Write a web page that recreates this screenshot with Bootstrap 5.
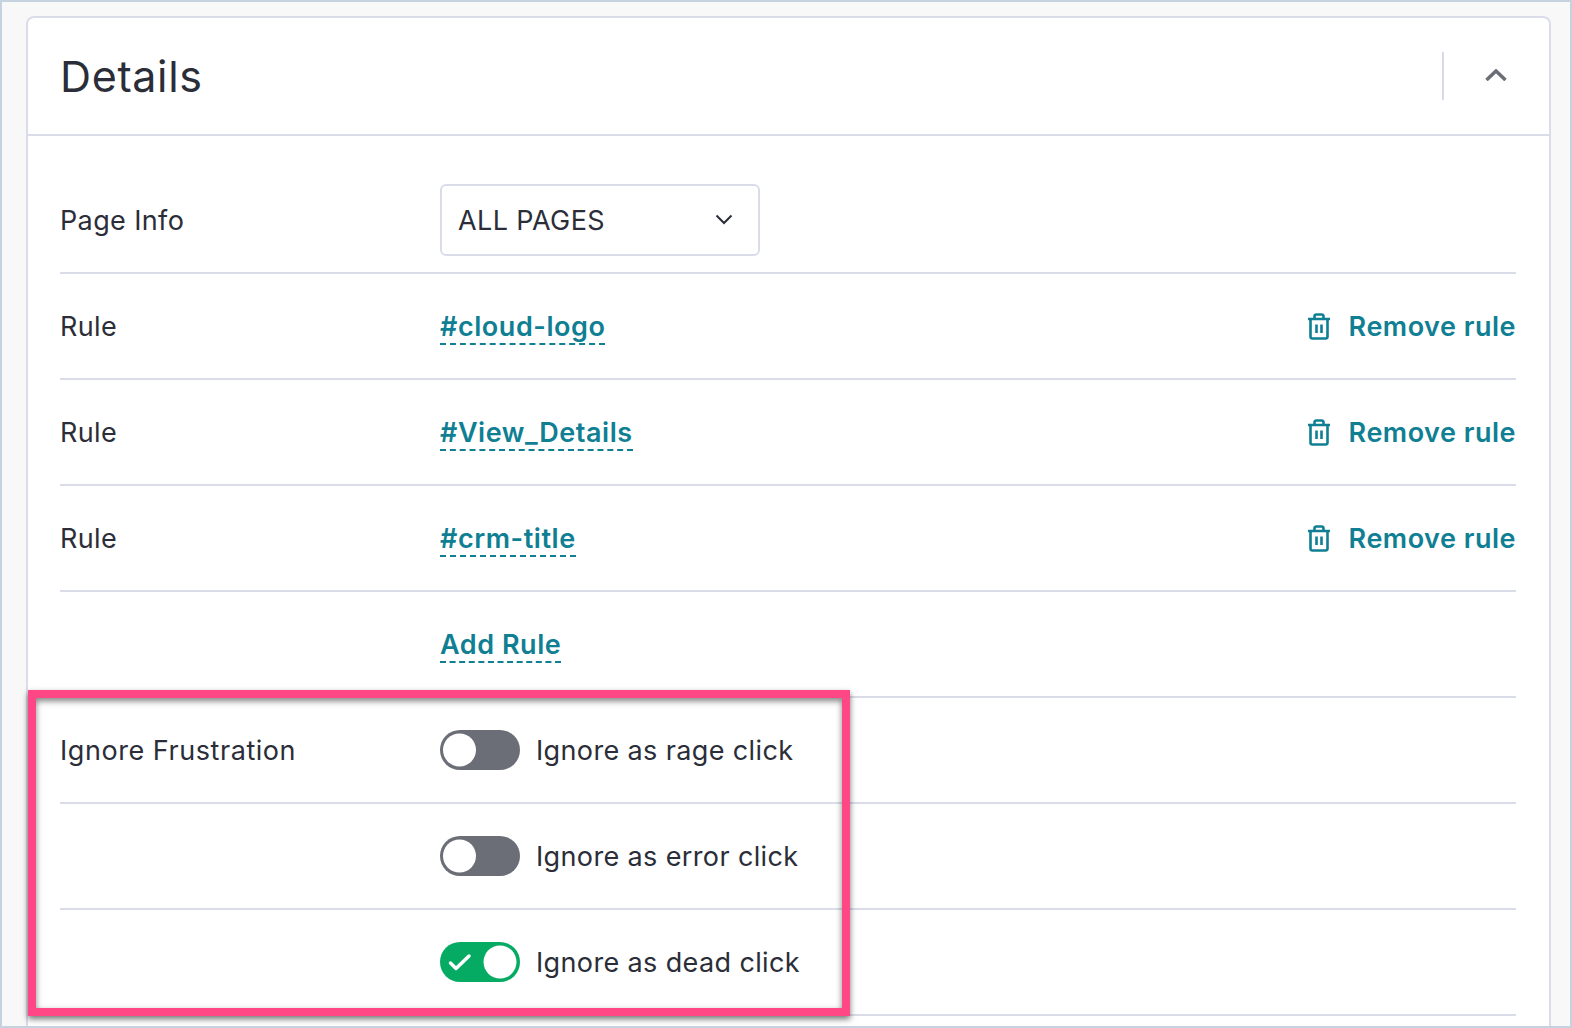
<!DOCTYPE html>
<html lang="en">
<head>
<meta charset="utf-8">
<title>Details</title>
<link href="https://cdn.jsdelivr.net/npm/bootstrap@5.3.0/dist/css/bootstrap.min.css" rel="stylesheet">
<style>
html,body{height:100%;overflow:hidden}
body{background:#f8f8f9;font-family:Inter,"Liberation Sans",sans-serif;color:#2b2e38;font-size:27px;letter-spacing:.37px}
.frame{position:relative;height:1028px;width:1572px;border:solid #c5d3e0;border-width:2px 2px 2px 2px;padding:14px 19px 0 24px;overflow:hidden;background:#f8f8f9}
.panel{background:#fff;border:2px solid #dadde9;border-bottom:0;border-radius:8px 8px 0 0;height:1100px}
.panel-head{height:118px;border-bottom:2px solid #dadde9;padding:0 34px 0 32px}
.panel-title{font-size:43px;font-weight:400;margin:0;line-height:1;letter-spacing:.65px;color:#2b2e38}
.head-tools{height:48px;border-left:2px solid #d8dbe6;width:77px;margin-right:-4px;padding-left:41px;padding-bottom:2px}
.panel-body{padding:31px 33px 0 32px}
.item{height:106px;border-bottom:2px solid #dadde9}
.item-first{height:107px}
.item-label{width:380px;flex:none;padding-top:2px}
.item-first .item-label{padding-top:4px}
.item-label.wide{letter-spacing:.55px}
.pick{width:320px;height:72px;border:2px solid #dadde9;border-radius:6px;padding:4px 25px 0 16px;background:#fff;color:#2b2e38;font-size:27px;letter-spacing:.4px}
.pick svg{margin-top:-4px}
.pick:hover,.pick:focus{background:#fff;border-color:#dadde9;color:#2b2e38}
.rule-link{color:#107f93;font-weight:600;text-decoration:none;border-bottom:2px dashed #107f93;line-height:1.15;margin-top:4px;letter-spacing:.55px}
.remove-link{color:#107f93;font-weight:600;text-decoration:none;gap:18px;padding-top:2px;letter-spacing:.5px}
.remove-link svg{margin-top:-2px}
.form-switch .form-check-input.tog{width:80px;height:40px;margin:0 16px 0 0;float:none;border-radius:20px;border:0;background-color:#6b6e77;box-shadow:none;
background-image:url("data:image/svg+xml,%3Csvg xmlns='http://www.w3.org/2000/svg' viewBox='0 0 80 40'%3E%3Ccircle cx='19.500' cy='20' r='16.5' fill='%23fff'/%3E%3C/svg%3E");background-size:80px 40px;background-position:0 0}
.form-switch .form-check-input.tog:checked{background-color:#05ab62;
background-image:url("data:image/svg+xml,%3Csvg xmlns='http://www.w3.org/2000/svg' viewBox='0 0 80 40'%3E%3Ccircle cx='60' cy='20' r='16.5' fill='%23fff'/%3E%3Cpath d='M10.5 21l5.500 5.500L29 14' fill='none' stroke='%23fff' stroke-width='3.500' stroke-linecap='round' stroke-linejoin='round'/%3E%3C/svg%3E")}
.tog-wrap{padding-left:0;min-height:0;margin:0}
.tog-wrap .form-check-label{opacity:1;padding-top:2px}
.callout{position:absolute;left:26px;top:688px;width:822px;height:326px;border:8px solid #ff4785;box-shadow:0 3px 6px rgba(0,0,0,.55),inset 0 3px 6px rgba(0,0,0,.5);pointer-events:none}
</style>
</head>
<body>
<div class="frame">
  <div class="panel">
    <div class="panel-head d-flex align-items-center justify-content-between">
      <h1 class="panel-title">Details</h1>
      <div class="head-tools d-flex align-items-center">
        <svg width="22" height="12" viewBox="0 0 22 12" fill="none" stroke="#6b6e77" stroke-width="3.500"><path d="M1.500 11 11 2l9.500 9"/></svg>
      </div>
    </div>
    <div class="panel-body">
      <div class="item item-first d-flex align-items-center">
        <div class="item-label">Page Info</div>
        <button type="button" class="btn pick d-flex align-items-center justify-content-between">ALL PAGES
          <svg width="18" height="11" viewBox="0 0 18 11" fill="none" stroke="#2b2e38" stroke-width="2"><path d="M1.500 1.500 9 9l7.500-7.500"/></svg>
        </button>
      </div>
      <div class="item d-flex align-items-center">
        <div class="item-label">Rule</div>
        <a class="rule-link" href="#">#cloud-logo</a>
        <a class="remove-link ms-auto d-flex align-items-center" href="#"><svg width="24" height="27" viewBox="0 0 24 27" fill="none" stroke="#107f93" stroke-width="2.600" stroke-linejoin="round"><path d="M1 6h22M3.500 6v17.500a2 2 0 0 0 2 2h13a2 2 0 0 0 2-2V6M7.500 6V3.500a2 2 0 0 1 2-2h5a2 2 0 0 1 2 2V6M9.500 11.500v8.500M14.500 11.500v8.500"/></svg>Remove rule</a>
      </div>
      <div class="item d-flex align-items-center">
        <div class="item-label">Rule</div>
        <a class="rule-link" href="#">#View_Details</a>
        <a class="remove-link ms-auto d-flex align-items-center" href="#"><svg width="24" height="27" viewBox="0 0 24 27" fill="none" stroke="#107f93" stroke-width="2.600" stroke-linejoin="round"><path d="M1 6h22M3.500 6v17.500a2 2 0 0 0 2 2h13a2 2 0 0 0 2-2V6M7.500 6V3.500a2 2 0 0 1 2-2h5a2 2 0 0 1 2 2V6M9.500 11.500v8.500M14.500 11.500v8.500"/></svg>Remove rule</a>
      </div>
      <div class="item d-flex align-items-center">
        <div class="item-label">Rule</div>
        <a class="rule-link" href="#">#crm-title</a>
        <a class="remove-link ms-auto d-flex align-items-center" href="#"><svg width="24" height="27" viewBox="0 0 24 27" fill="none" stroke="#107f93" stroke-width="2.600" stroke-linejoin="round"><path d="M1 6h22M3.500 6v17.500a2 2 0 0 0 2 2h13a2 2 0 0 0 2-2V6M7.500 6V3.500a2 2 0 0 1 2-2h5a2 2 0 0 1 2 2V6M9.500 11.500v8.500M14.500 11.500v8.500"/></svg>Remove rule</a>
      </div>
      <div class="item d-flex align-items-center">
        <div class="item-label"></div>
        <a class="rule-link" href="#">Add Rule</a>
      </div>
      <div class="item d-flex align-items-center">
        <div class="item-label wide">Ignore Frustration</div>
        <div class="form-check form-switch tog-wrap d-flex align-items-center"><input class="form-check-input tog" type="checkbox" role="switch" id="t1"><label class="form-check-label" for="t1">Ignore as rage click</label></div>
      </div>
      <div class="item d-flex align-items-center">
        <div class="item-label"></div>
        <div class="form-check form-switch tog-wrap d-flex align-items-center"><input class="form-check-input tog" type="checkbox" role="switch" id="t2"><label class="form-check-label" for="t2">Ignore as error click</label></div>
      </div>
      <div class="item d-flex align-items-center">
        <div class="item-label"></div>
        <div class="form-check form-switch tog-wrap d-flex align-items-center"><input class="form-check-input tog" type="checkbox" role="switch" id="t3" checked><label class="form-check-label" for="t3">Ignore as dead click</label></div>
      </div>
    </div>
  </div>
  <div class="callout"></div>
</div>
<script src="https://cdn.jsdelivr.net/npm/bootstrap@5.3.0/dist/js/bootstrap.bundle.min.js"></script>
</body>
</html>
